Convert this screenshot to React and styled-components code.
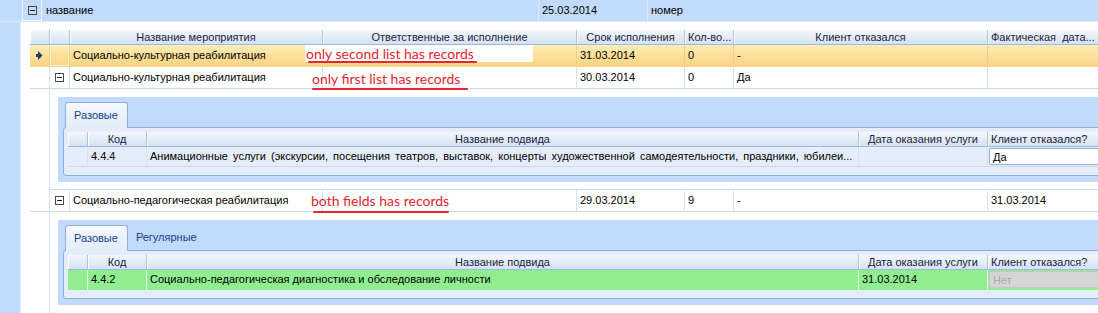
import React from 'react';
import styled, { createGlobalStyle, css } from 'styled-components';

const GlobalStyle = createGlobalStyle`
  html, body { margin: 0; padding: 0; background: #fff; }
  body { font-family: "Liberation Sans", Arial, sans-serif; font-size: 11px; color: #000; }
  * { box-sizing: border-box; }
`;

const BLUE = '#c2dafb';
const MAIN_COLS = '20px 20px 253px 254px 108px 49px 254px 220px';
const SUB_COLS = '20px 59px 712px 129px 240px';

const Screen = styled.div`
  position: relative;
  width: 1098px;
  height: 313px;
  overflow: hidden;
  background: #fff;
  display: flex;
  flex-direction: column;
`;

const GroupRow = styled.div`
  display: flex;
  flex: none;
  height: 22px;
  background: ${BLUE};
  border-bottom: 1px solid #d8e7fb;
`;

const GroupIndent = styled.div`
  width: 22px;
  flex: none;
`;

const GroupExpander = styled.div`
  width: 20px;
  flex: none;
  border: 1px solid #edf4fe;
  border-top: none;
  display: flex;
  align-items: center;
  justify-content: center;
`;

const GroupCell = styled.div`
  flex: ${p => (p.$w ? 'none' : '1')};
  width: ${p => (p.$w ? `${p.$w}px` : 'auto')};
  padding-left: ${p => p.$pad || 3}px;
  line-height: 21px;
  white-space: nowrap;
  border-left: ${p => (p.$sep ? '1px solid #dce9fb' : 'none')};
`;

const Toggle = styled.span`
  position: relative;
  display: inline-block;
  width: 9px;
  height: 9px;
  border: 1px solid #4a4a4a;
  background: ${p => (p.$clear ? 'transparent' : '#fff')};
  &::after {
    content: '';
    position: absolute;
    left: 1px;
    right: 1px;
    top: 3px;
    height: 1px;
    background: #222;
  }
`;

const Body = styled.div`
  flex: 1;
  display: flex;
  min-height: 0;
`;

const LeftStrip = styled.div`
  width: 21px;
  flex: none;
  background: ${BLUE};
  border-right: 1px solid #e2edfb;
`;

const Content = styled.div`
  flex: 1;
  padding: 8px 0 0 9px;
  min-width: 0;
`;

const Grid = styled.div`
  width: ${p => p.$width}px;
`;

const HeadRow = styled.div`
  display: grid;
  grid-template-columns: ${p => p.$cols};
  height: 15px;
`;

const HeadCell = styled.div`
  height: 15px;
  background: linear-gradient(#f3f7fd, #e2ecf8 55%, #d3e2f5);
  border-right: 1px solid #a9c3e5;
  border-bottom: 1px solid #9cb9df;
  box-shadow: inset 1px 0 0 #fbfdff;
  color: #1d1b3f;
  text-align: ${p => p.$align || 'center'};
  line-height: 14px;
  padding: 0 3px;
  white-space: pre;
  overflow: hidden;
`;

const Row = styled.div`
  display: grid;
  grid-template-columns: ${p => p.$cols};
  height: ${p => p.$h || 22}px;
  ${p =>
    p.$selected &&
    css`
      background: linear-gradient(#feedb8, #fde09a 45%, #fcd283);
    `}
  ${p =>
    p.$green &&
    css`
      background: #90ee90;
    `}
`;

const Cell = styled.div`
  border-right: 1px solid ${p => (p.$green ? '#eafbea' : p.$selected ? '#f3cf86' : '#d5e2f2')};
  border-bottom: 1px solid ${p => (p.$green ? '#90ee90' : p.$selected ? '#f4d38f' : '#cbdaee')};
  padding: 0 3px;
  line-height: ${p => (p.$h || 22) - 1}px;
  white-space: nowrap;
  overflow: hidden;
  display: flex;
  align-items: center;
  justify-content: ${p => (p.$center ? 'center' : 'flex-start')};
  ${p =>
    p.$focus &&
    css`
      box-shadow: inset 0 0 0 1px #fff3cf;
    `}
`;

const DetailRow = styled.div`
  display: flex;
  height: ${p => p.$h}px;
`;

const Gutter = styled.div`
  width: 20px;
  flex: none;
  border-right: 1px solid #d5e2f2;
`;

const DetailBody = styled.div`
  flex: 1;
  padding: 8px 0 6px 8px;
  border-bottom: 1px solid ${p => (p.$last ? 'transparent' : '#cbdaee')};
`;

const Panel = styled.div`
  background: ${BLUE};
  padding: 5px 0 6px 5px;
`;

const TabStrip = styled.div`
  display: flex;
  align-items: flex-end;
  height: 25px;
  padding-left: 2px;
  position: relative;
  z-index: 1;
`;

const Tab = styled.div`
  height: ${p => (p.$active ? 26 : 25)}px;
  margin-bottom: ${p => (p.$active ? -1 : 0)}px;
  padding: 0 ${p => (p.$active ? 9 : 8)}px 0 ${p => (p.$active ? 8 : 8)}px;
  line-height: 25px;
  color: #15428b;
  ${p =>
    p.$active &&
    css`
      border: 1px solid #8cb0de;
      border-bottom: none;
      border-radius: 3px 3px 0 0;
      background: linear-gradient(#f6f9fe, #e9f0fa 60%, #e4edf9);
    `}
`;

const TabBox = styled.div`
  border: 1px solid #8cb0de;
  border-radius: 3px;
  background: #e4edf9;
  padding: 4px 0 8px 4px;
`;

const Combo = styled.div`
  flex: 1;
  align-self: stretch;
  margin: 1px 0 1px -1px;
  border: 1px solid ${p => (p.$disabled ? '#c6c6c6' : '#98b1d2')};
  border-radius: 2px;
  background: ${p => (p.$disabled ? '#d4d4d4' : '#fff')};
  color: ${p => (p.$disabled ? '#a9a9a9' : '#000')};
  padding-left: 3px;
  line-height: 16px;
`;

const Indicator = styled.svg`
  display: block;
`;

const Note = styled.div`
  position: absolute;
  left: ${p => p.$x}px;
  top: ${p => p.$y}px;
  width: ${p => (p.$w ? `${p.$w}px` : 'auto')};
  height: 17px;
  background: ${p => (p.$bg ? '#fff' : 'transparent')};
  color: #e5262c;
  font-family: Lato, "Open Sans", sans-serif;
  font-size: 14px;
  line-height: 17px;
  padding-left: 1px;
  white-space: nowrap;
`;

const Underline = styled.div`
  position: absolute;
  left: ${p => p.$x}px;
  top: ${p => p.$y}px;
  width: ${p => p.$w}px;
  height: 2px;
  background: #e8262c;
  border-radius: 1px;
`;

const mainHeaders = [
  ['', 'center'],
  ['', 'center'],
  ['Название мероприятия', 'center'],
  ['Ответственные за исполнение', 'center'],
  ['Срок исполнения', 'center'],
  ['Кол-во...', 'left'],
  ['Клиент отказался', 'center'],
  ['Фактическая  дата...', 'left'],
];

const subHeaders = ['', 'Код', 'Название подвида', 'Дата оказания услуги', 'Клиент отказался?'];

function Arrow() {
  return (
    <Indicator width="7" height="9" viewBox="0 0 7 9">
      <rect x="0" y="3" width="2" height="3" fill="#1f3d70" />
      <polygon points="2,0 6.5,4.5 2,9" fill="#1f3d70" />
    </Indicator>
  );
}

function MainRow({ selected, name, due, count, refused, actual }) {
  return (
    <Row $cols={MAIN_COLS} $selected={selected}>
      <Cell $selected={selected} $center>{selected && <Arrow />}</Cell>
      <Cell $selected={selected} $center $focus={selected}>{!selected && <Toggle />}</Cell>
      <Cell $selected={selected}>{name}</Cell>
      <Cell $selected={selected} />
      <Cell $selected={selected}>{due}</Cell>
      <Cell $selected={selected}>{count}</Cell>
      <Cell $selected={selected}>{refused}</Cell>
      <Cell $selected={selected}>{actual}</Cell>
    </Row>
  );
}

function SubGrid({ tabs, row }) {
  return (
    <Panel>
      <TabStrip>
        {tabs.map((t, i) => (
          <Tab key={t} $active={i === 0}>{t}</Tab>
        ))}
      </TabStrip>
      <TabBox>
        <Grid $width={1160}>
          <HeadRow $cols={SUB_COLS}>
            {subHeaders.map((h, i) => (
              <HeadCell key={i} $align={i === 4 ? 'left' : 'center'}>{h}</HeadCell>
            ))}
          </HeadRow>
          <Row $cols={SUB_COLS} $h={20} $green={row.green}>
            <Cell $h={20} $green={row.green} />
            <Cell $h={20} $green={row.green}>{row.code}</Cell>
            <Cell $h={20} $green={row.green} style={row.spacing ? { wordSpacing: row.spacing } : undefined}>
              {row.name}
            </Cell>
            <Cell $h={20} $green={row.green}>{row.date}</Cell>
            <Cell $h={20} $green={row.green} style={{ paddingLeft: 2 }}>
              <Combo $disabled={row.green}>{row.refused}</Combo>
            </Cell>
          </Row>
        </Grid>
      </TabBox>
    </Panel>
  );
}

export default function App() {
  return (
    <>
      <GlobalStyle />
      <Screen>
        <GroupRow>
          <GroupIndent />
          <GroupExpander>
            <Toggle $clear />
          </GroupExpander>
          <GroupCell $w={496} $pad={4}>название</GroupCell>
          <GroupCell $w={109} $sep>25.03.2014</GroupCell>
          <GroupCell $sep>номер</GroupCell>
        </GroupRow>
        <Body>
          <LeftStrip />
          <Content>
            <Grid $width={1178}>
              <HeadRow $cols={MAIN_COLS}>
                {mainHeaders.map(([h, a], i) => (
                  <HeadCell key={i} $align={a}>{h}</HeadCell>
                ))}
              </HeadRow>
              <MainRow selected name="Социально-культурная реабилитация" due="31.03.2014" count="0" refused="-" actual="" />
              <MainRow name="Социально-культурная реабилитация" due="30.03.2014" count="0" refused="Да" actual="" />
              <DetailRow $h={101}>
                <Gutter />
                <DetailBody>
                  <SubGrid
                    tabs={['Разовые']}
                    row={{
                      code: '4.4.4',
                      name:
                        'Анимационные услуги (экскурсии, посещения театров, выставок, концерты художественной самодеятельности, праздники, юбилеи...',
                      spacing: '2px',
                      date: '',
                      refused: 'Да',
                    }}
                  />
                </DetailBody>
              </DetailRow>
              <MainRow name="Социально-педагогическая реабилитация" due="29.03.2014" count="9" refused="-" actual="31.03.2014" />
              <DetailRow $h={110}>
                <Gutter />
                <DetailBody $last>
                  <SubGrid
                    tabs={['Разовые', 'Регулярные']}
                    row={{
                      code: '4.4.2',
                      name: 'Социально-педагогическая диагностика и обследование личности',
                      date: '31.03.2014',
                      refused: 'Нет',
                      green: true,
                    }}
                  />
                </DetailBody>
              </DetailRow>
            </Grid>
          </Content>
        </Body>

        <Note $x={305} $y={45} $w={228} $bg>only second list has records</Note>
        <Underline $x={308} $y={61} $w={169} />
        <Note $x={311} $y={70}>only first list has records</Note>
        <Underline $x={312} $y={88} $w={156} />
        <Note $x={310} $y={192}>both fields has records</Note>
        <Underline $x={313} $y={211} $w={136} />
      </Screen>
    </>
  );
}
